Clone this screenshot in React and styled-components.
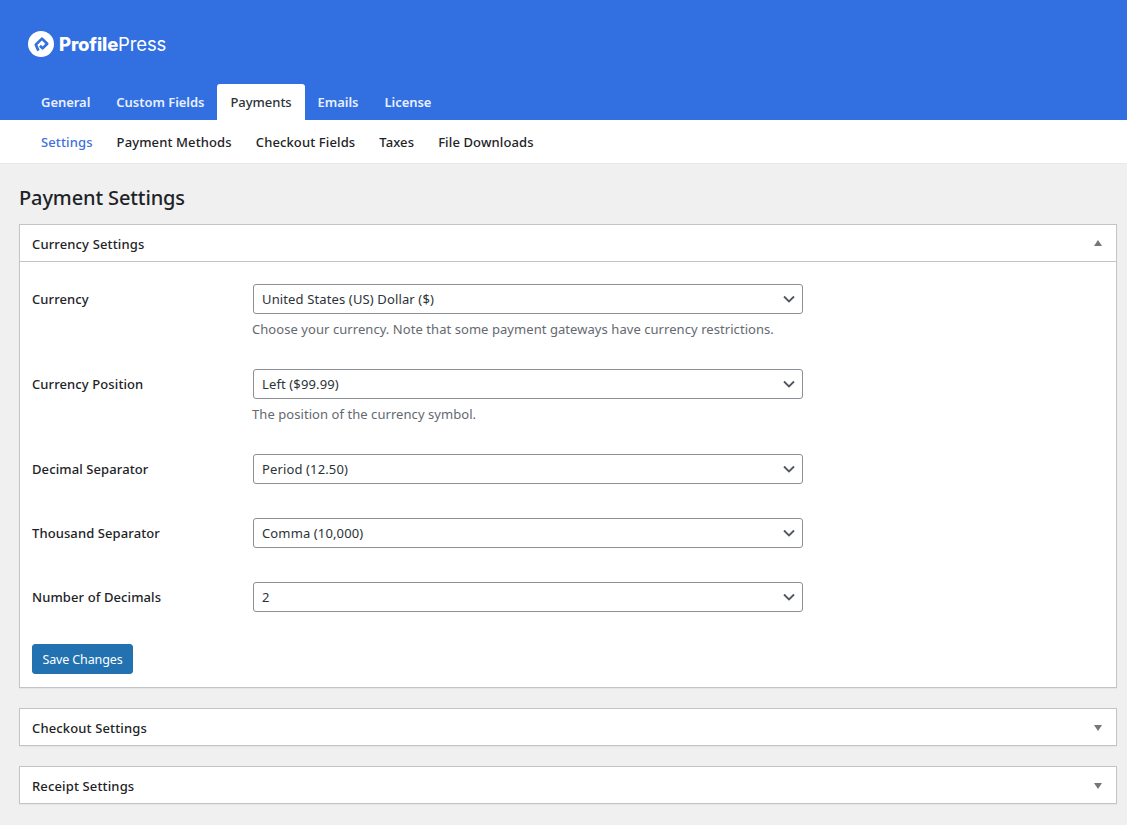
import React from "react";
import styled, { createGlobalStyle } from "styled-components";

const Global = createGlobalStyle`
  html, body { margin: 0; padding: 0; background: #f0f0f1; }
  body { font-family: "Noto Sans", "Open Sans", sans-serif; color: #2c3338; font-size: 13px; }
  * { box-sizing: border-box; }
`;

const Header = styled.header`
  height: 120px;
  background: #326fe0;
  display: flex;
  flex-direction: column;
  justify-content: space-between;
  padding-left: 28px;
`;
const Logo = styled.div`
  display: flex;
  align-items: center;
  gap: 5px;
  padding-top: 31px;
  height: 57px;
  color: #fff;
`;
const LogoText = styled.span`
  font-family: "Inter", sans-serif;
  font-size: 18.5px;
  letter-spacing: -0.15px;
  font-weight: 800;
  b { font-weight: 400; }
`;
const Tabs = styled.nav`
  display: flex;
  height: 36px;
`;
const Tab = styled.a`
  display: flex;
  align-items: center;
  justify-content: center;
  height: 36px;
  padding: 0 13px;
  font-size: 13px;
  letter-spacing: -0.04px;
  font-weight: ${(p) => (p.$active ? 500 : 600)};
  color: ${(p) => (p.$active ? "#2c3338" : "#e8f0ff")};
  background: ${(p) => (p.$active ? "#fff" : "transparent")};
  border-radius: ${(p) => (p.$active ? "3px 3px 0 0" : "0")};
`;
const SubNav = styled.nav`
  height: 44px;
  background: #fff;
  border-bottom: 1px solid #e9e9ea;
  display: flex;
  align-items: center;
  gap: 24px;
  padding-left: 41px;
`;
const SubLink = styled.a`
  font-size: 13px;
  letter-spacing: 0.12px;
  font-weight: 500;
  color: ${(p) => (p.$active ? "#3e6fdc" : "#1d2327")};
`;
const Main = styled.main`
  padding: 0 10px 21px 19px;
`;
const Title = styled.h1`
  margin: 0;
  height: 60px;
  padding-top: 20px;
  font-size: 20px;
  line-height: 28px;
  font-weight: 500;
  color: #1d2327;
  letter-spacing: -0.12px;
`;
const Panel = styled.section`
  background: #fff;
  border: 1px solid #c3c4c7;
  box-shadow: 0 1px 1px rgba(0, 0, 0, 0.04);
  & + & { margin-top: 20px; }
`;
const PanelHead = styled.div`
  height: ${(p) => (p.$open ? "37px" : "36px")};
  display: flex;
  align-items: center;
  justify-content: space-between;
  padding: 0 14px 0 12px;
  border-bottom: ${(p) => (p.$open ? "1px solid #c3c4c7" : "none")};
`;
const PanelTitle = styled.h2`
  margin: 0;
  padding-top: 2px;
  font-size: 13px;
  font-weight: 500;
  letter-spacing: 0.14px;
  color: #1d2327;
`;
const PanelBody = styled.div`
  padding: 22px 12px 13px;
`;
const Field = styled.div`
  display: grid;
  grid-template-columns: 221px 550px;
  align-items: center;
  margin-bottom: ${(p) => (p.$help ? "30px" : "34px")};
  &:last-of-type { margin-bottom: 32px; }
`;
const Label = styled.label`
  font-size: 13px;
  font-weight: 500;
  letter-spacing: 0.1px;
  color: #1d2327;
`;
const SelectWrap = styled.div`
  position: relative;
  height: 30px;
`;
const Select = styled.select`
  appearance: none;
  width: 100%;
  height: 30px;
  padding: 0 24px 0 8px;
  border: 1px solid #8c8f94;
  border-radius: 3px;
  background: #fff;
  font: inherit;
  font-size: 13px;
  letter-spacing: 0.13px;
  color: #2c3338;
`;
const Chevron = styled.svg`
  position: absolute;
  right: 8px;
  top: 10px;
  width: 12px;
  height: 10px;
  pointer-events: none;
`;
const Help = styled.p`
  grid-column: 2;
  margin: 5px 0 0 -1px;
  font-size: 13px;
  line-height: 20px;
  letter-spacing: 0.06px;
  color: #646970;
`;
const SaveButton = styled.button`
  display: block;
  width: 101px;
  height: 30px;
  padding: 0;
  border: 1px solid #2271b1;
  border-radius: 3px;
  background: #2271b1;
  color: #fff;
  font: inherit;
  font-size: 12.5px;
  letter-spacing: -0.12px;
`;
const ArrowIcon = styled.svg`
  width: 8px;
  height: 6px;
  margin-top: ${(p) => (p.$up ? "-1px" : "2px")};
`;

const Arrow = ({ up }) => (
  <ArrowIcon $up={up} viewBox="0 0 8 6" aria-hidden="true">
    <path d={up ? "M4 0 8 6H0Z" : "M0 0H8L4 6Z"} fill="#72777c" />
  </ArrowIcon>
);

const LogoMark = () => (
  <svg width="26" height="26" viewBox="0 0 26 26" aria-hidden="true">
    <circle cx="13" cy="13" r="13" fill="#fff" />
    <path
      d="M10.4 19.6 7.8 13.6 14 7.6 19.2 12.8 14.6 17.4 12 14.8"
      fill="none"
      stroke="#326fe0"
      strokeWidth="2.7"
      strokeLinejoin="round"
    />
  </svg>
);

const fields = [
  { label: "Currency", value: "United States (US) Dollar ($)", help: "Choose your currency. Note that some payment gateways have currency restrictions." },
  { label: "Currency Position", value: "Left ($99.99)", help: "The position of the currency symbol." },
  { label: "Decimal Separator", value: "Period (12.50)" },
  { label: "Thousand Separator", value: "Comma (10,000)" },
  { label: "Number of Decimals", value: "2" },
];

export default function App() {
  return (
    <>
      <Global />
      <Header>
        <Logo>
          <LogoMark />
          <LogoText>Profile<b>Press</b></LogoText>
        </Logo>
        <Tabs>
          <Tab>General</Tab>
          <Tab>Custom Fields</Tab>
          <Tab $active>Payments</Tab>
          <Tab>Emails</Tab>
          <Tab>License</Tab>
        </Tabs>
      </Header>
      <SubNav>
        <SubLink $active>Settings</SubLink>
        <SubLink>Payment Methods</SubLink>
        <SubLink>Checkout Fields</SubLink>
        <SubLink>Taxes</SubLink>
        <SubLink>File Downloads</SubLink>
      </SubNav>
      <Main>
        <Title>Payment Settings</Title>
        <Panel>
          <PanelHead $open>
            <PanelTitle>Currency Settings</PanelTitle>
            <Arrow up />
          </PanelHead>
          <PanelBody>
            {fields.map((f) => (
              <Field key={f.label} $help={!!f.help}>
                <Label>{f.label}</Label>
                <SelectWrap>
                  <Select defaultValue={f.value}>
                    <option>{f.value}</option>
                  </Select>
                  <Chevron viewBox="0 0 12 10" aria-hidden="true">
                    <path d="M1 2.5 6 7.5 11 2.5" fill="none" stroke="#50575e" strokeWidth="1.8" />
                  </Chevron>
                </SelectWrap>
                {f.help && <Help>{f.help}</Help>}
              </Field>
            ))}
            <SaveButton>Save Changes</SaveButton>
          </PanelBody>
        </Panel>
        <Panel>
          <PanelHead>
            <PanelTitle>Checkout Settings</PanelTitle>
            <Arrow />
          </PanelHead>
        </Panel>
        <Panel>
          <PanelHead>
            <PanelTitle>Receipt Settings</PanelTitle>
            <Arrow />
          </PanelHead>
        </Panel>
      </Main>
    </>
  );
}
